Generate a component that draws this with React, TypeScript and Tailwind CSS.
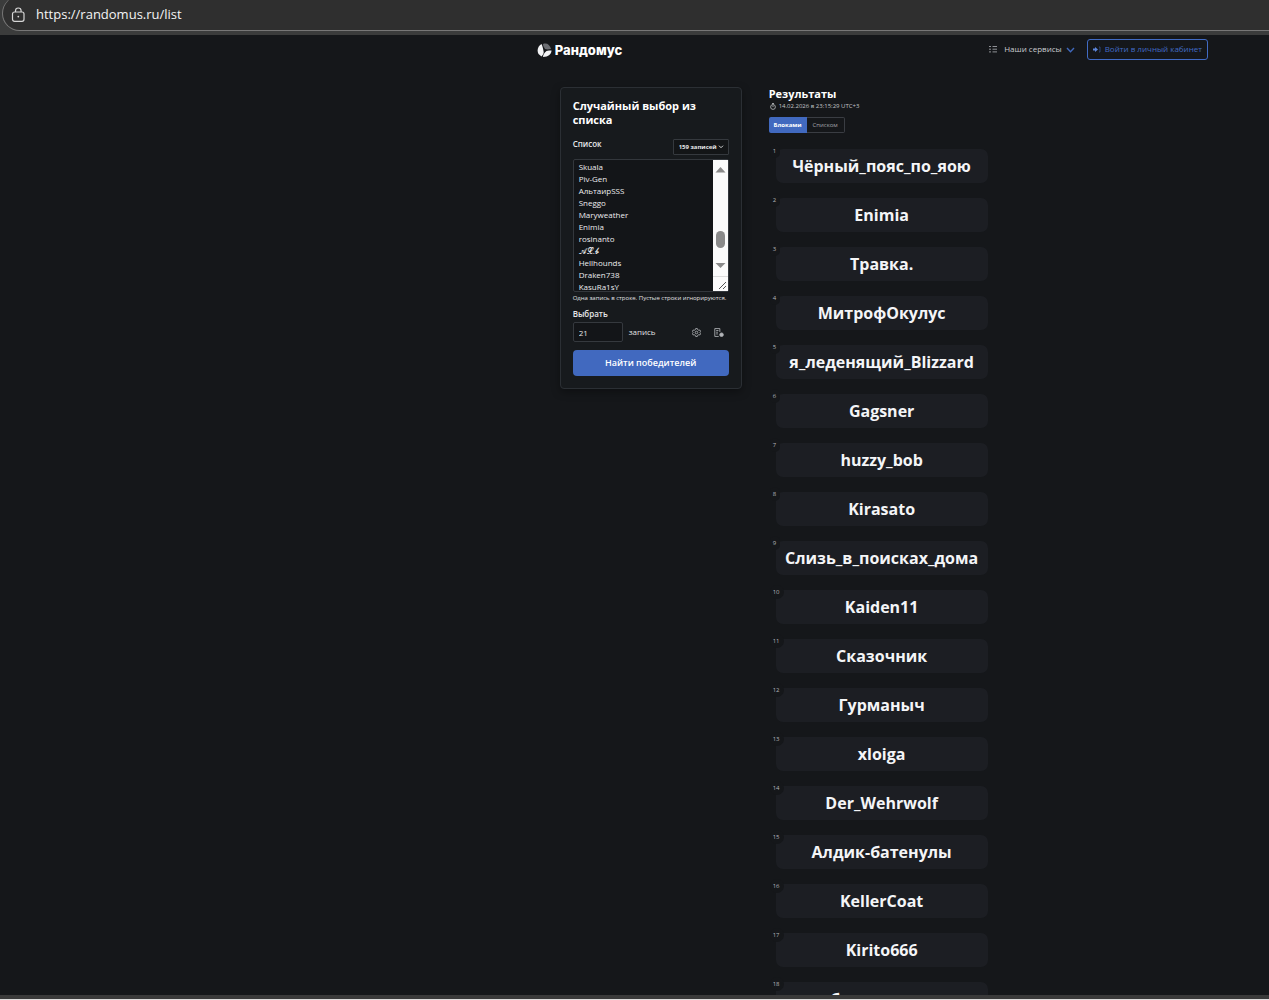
import React from "react";

const entries = [
  "Skuala",
  "Piv-Gen",
  "АльтаирSSS",
  "Sneggo",
  "Maryweather",
  "Enimia",
  "rosinanto",
  "𝓐𝓛.𝓫",
  "Hellhounds",
  "Draken738",
  "KasuRa1sY",
];

const winners = [
  "Чёрный_пояс_по_яою",
  "Enimia",
  "Травка.",
  "МитрофОкулус",
  "я_леденящий_Blizzard",
  "Gagsner",
  "huzzy_bob",
  "Kirasato",
  "Слизь_в_поисках_дома",
  "Kaiden11",
  "Сказочник",
  "Гурманыч",
  "xloiga",
  "Der_Wehrwolf",
  "Алдик-батенулы",
  "KellerCoat",
  "Kirito666",
  "бармаглоты",
];

function AddressBar() {
  return (
    <div className="h-[35px] shrink-0 overflow-hidden bg-[#3b3c3c]">
      <div className="-mt-1 ml-[2px] flex h-[35px] items-center gap-[10px] rounded-l-full border-b border-l border-[#777777] bg-[#2f2f2f] pl-2 pt-[3px]">
        <svg width="15" height="16" viewBox="0 0 15 16" fill="none" stroke="#d6d6d6" strokeWidth="1.2" aria-hidden="true">
          <rect x="1.5" y="5" width="11.5" height="9.3" rx="2" />
          <path d="M4.5 5V3.8a2.8 2.8 0 0 1 5.6 0V5" />
          <circle cx="7.3" cy="9.6" r="0.9" fill="#d6d6d6" stroke="none" />
        </svg>
        <input
          aria-label="Адрес"
          readOnly
          value="https://randomus.ru/list"
          className="min-w-0 flex-1 bg-transparent text-[13px] text-[#f4f4f4] outline-none"
        />
      </div>
    </div>
  );
}

function Header() {
  return (
    <header className="flex h-7 items-center justify-between pl-[42.3%] pr-[61px]">
      <a href="#" className="flex items-center gap-[3px] pt-[2px] text-white">
        <svg width="15" height="15" viewBox="0 0 30 30" aria-hidden="true">
          <path d="M9 2C2 6-1 15 3 22l6 5c4-4 5-7 4-11C12 10 11 6 9 2Z" fill="#f2f3f5" />
          <path d="M12 2c7-3 14 1 16 10-5 1-9 1-12 0-2-3-4-6-4-10Z" fill="#6b6d72" />
          <path d="M29 15c0 7-6 13-17 13 0-5 3-9 7-12 3-1 7-1 10-1Z" fill="#f2f3f5" />
        </svg>
        <span className="font-[Inter,sans-serif] text-[13px] font-extrabold leading-4">Рандомус</span>
      </a>
      <nav className="flex items-center gap-3">
        <button className="flex items-center text-[8px] text-[#c9cbcf]">
          <svg width="9" height="8" viewBox="0 0 9 8" stroke="#8f9196" strokeWidth="1" className="mr-[6px]" aria-hidden="true">
            <path d="M0 1.5h2M3.5 1.5H8M0 4.2h2M3.5 4.2H8M0 6.9h2M3.5 6.9H8" />
          </svg>
          Наши сервисы
          <svg width="9" height="6" viewBox="0 0 9 6" fill="none" stroke="#4069bd" strokeWidth="1.4" className="ml-1 mt-[2px]" aria-hidden="true">
            <path d="m1 1 3.5 3.7L8 1" />
          </svg>
        </button>
        <button className="flex h-[21px] items-center gap-1 rounded-[3px] border border-[#416bc4] px-[5px] text-[8px] text-[#416bc4]">
          <svg width="8" height="7" viewBox="0 0 8 7" aria-hidden="true">
            <path d="M0 2.6h2V1l3 2.5-3 2.5V4.4H0Z" fill="#5d86dc" />
            <path d="M6 1h1v5H6" fill="none" stroke="#34518f" strokeWidth="0.8" />
          </svg>
          Войти в личный кабинет
        </button>
      </nav>
    </header>
  );
}

function ScrollRail() {
  return (
    <div className="flex w-[15px] shrink-0 flex-col items-center bg-[#fbfbfb]" aria-hidden="true">
      <svg width="15" height="131" viewBox="0 0 15 131">
        <path d="M2.5 12.5 7.5 7l5 5.5Z" fill="#8a8a8a" />
        <rect x="3" y="71" width="9" height="17" rx="4.5" fill="#8a8a8a" />
        <path d="M2.5 103h10l-5 5Z" fill="#8a8a8a" />
        <path d="M0 116.5h15" stroke="#dcdcdc" />
        <path d="m6 129 7-7m-3 7 3-3" stroke="#555" strokeWidth="1" />
      </svg>
    </div>
  );
}

function PickForm() {
  return (
    <form className="w-[182px] shrink-0 rounded-[4px] border border-[#2b2f34] bg-[#171a1d] px-3 pb-3 pt-[11px] shadow-[0_3px_8px_rgba(0,0,0,0.35)]" onSubmit={(e) => e.preventDefault()}>
      <h1 className="text-[11px] font-bold leading-[14px] text-white">Случайный выбор из списка</h1>
      <div className="mt-3 flex h-4 items-center justify-between">
        <label htmlFor="list" className="-mt-[6px] text-[8px] font-semibold text-[#e6e7e9]">Список</label>
        <div className="relative flex items-center">
          <select aria-label="Количество записей" className="h-4 w-[56px] appearance-none rounded-[1px] border border-[#35393e] bg-[#131517] pl-[5px] text-[6px] font-bold text-[#e6e7e9]">
            <option>159 записей</option>
          </select>
          <svg width="6" height="4" viewBox="0 0 6 4" fill="none" stroke="#d6d7d9" className="pointer-events-none absolute right-[5px]" aria-hidden="true">
            <path d="m1 .7 2 2 2-2" />
          </svg>
        </div>
      </div>
      <div className="mt-1 flex h-[133px] rounded-[2px] border border-[#33373c] bg-[#131518]">
        <textarea
          id="list"
          defaultValue={entries.join("\n")}
          className="min-w-0 flex-1 resize-none overflow-hidden bg-transparent pl-[5px] pt-[1px] text-[8px] leading-[12px] text-[#ececee] outline-none"
        />
        <ScrollRail />
      </div>
      <p className="mt-[1px] whitespace-nowrap text-[6px] leading-[10px] text-[#e0e1e3]">Одна запись в строке. Пустые строки игнорируются.</p>
      <label htmlFor="count" className="mt-[5px] block text-[8px] font-semibold leading-3 text-[#e6e7e9]">Выбрать</label>
      <div className="mt-[2px] flex items-center">
        <input id="count" defaultValue="21" className="h-5 w-[50px] rounded-[2px] border border-[#35393e] bg-[#131518] pl-[5px] text-[8px] text-[#e6e7e9]" />
        <span className="ml-[6px] text-[8px] text-[#e0e1e3]">запись</span>
        <div className="ml-auto mr-[5px] flex items-center gap-[13px] text-[#b2b4b8]">
          <button type="button" aria-label="Настройки">
            <svg width="9" height="9" viewBox="0 0 16 16" fill="none" stroke="currentColor" strokeWidth="1.5" className="block">
              <path d="M6.5 1h3l.6 2 1.9 1 2-.4 1.3 2.5L14 8l1.3 1.9L14 12.4l-2-.4-1.9 1-.6 2h-3l-.6-2L4 12l-2 .4L.7 9.9 2 8 .7 6.1 2 3.6 4 4l1.9-1Z" />
              <circle cx="8" cy="8" r="2.3" />
            </svg>
          </button>
          <button type="button" aria-label="Исключения">
            <svg width="10" height="9" viewBox="0 0 17 16" fill="none" stroke="currentColor" strokeWidth="1.5" className="block">
              <path d="M8 15H1V1h9v6M3.5 4.5h4M3.5 7.5h3M3.5 10.5h3" />
              <circle cx="13" cy="12" r="3.2" fill="#b2b4b8" />
            </svg>
          </button>
        </div>
      </div>
      <button type="submit" className="mt-2 block h-[26px] w-full rounded-[4px] bg-[#4169bf] text-[9px] font-semibold text-white">Найти победителей</button>
    </form>
  );
}

function Results() {
  return (
    <section className="w-[219px] shrink-0">
      <h2 className="text-[11px] font-bold leading-[14px] text-white">Результаты</h2>
      <p className="flex h-[11px] items-center gap-[3px] pl-[1px] text-[6px] text-[#c2c4c8]">
        <svg width="6" height="7" viewBox="0 0 12 14" fill="none" stroke="#c6c8cb" strokeWidth="1.5" aria-hidden="true">
          <circle cx="6" cy="8" r="4.8" />
          <path d="M6 8V5M4 1h4M6 1v2" />
        </svg>
        14.02.2026 в 23:15:29 UTC+3
      </p>
      <div className="mt-[5px] flex h-4 w-[76px] text-[6px]">
        <button className="w-[38px] rounded-l-[2px] bg-[#4169bf] font-bold text-white">Блоками</button>
        <button className="flex-1 rounded-r-[2px] border border-l-0 border-[#3a3d43] text-[#a3a5aa]">Списком</button>
      </div>
      <ol className="mt-4 flex flex-col gap-[15px] pl-[7px]">
        {winners.map((name, i) => (
          <li key={name} className="relative flex h-[34px] items-center justify-center rounded-[7px] bg-[#1c1e23]">
            <span className="absolute -left-[6px] -top-[5px] flex h-[14px] min-w-[10px] items-center justify-start rounded-full bg-[#15171a] pl-[3px] pr-[4px] text-[6px] text-[#b4b6ba]">{i + 1}</span>
            <span className="whitespace-nowrap text-[16px] font-bold leading-5 text-[#f4f5f7]">{name}</span>
          </li>
        ))}
      </ol>
    </section>
  );
}

export default function App() {
  return (
    <div className="flex h-screen flex-col overflow-hidden bg-[#15171a] font-['Open_Sans','Noto_Sans',sans-serif]">
      <AddressBar />
      <div className="min-h-0 flex-1 overflow-hidden">
        <Header />
        <main className="flex items-start gap-[27px] pl-[44.1%] pt-6">
          <PickForm />
          <Results />
        </main>
      </div>
      <div className="h-[5px] shrink-0 border-b border-[#dedede] bg-[#3a3a3a]" />
    </div>
  );
}
